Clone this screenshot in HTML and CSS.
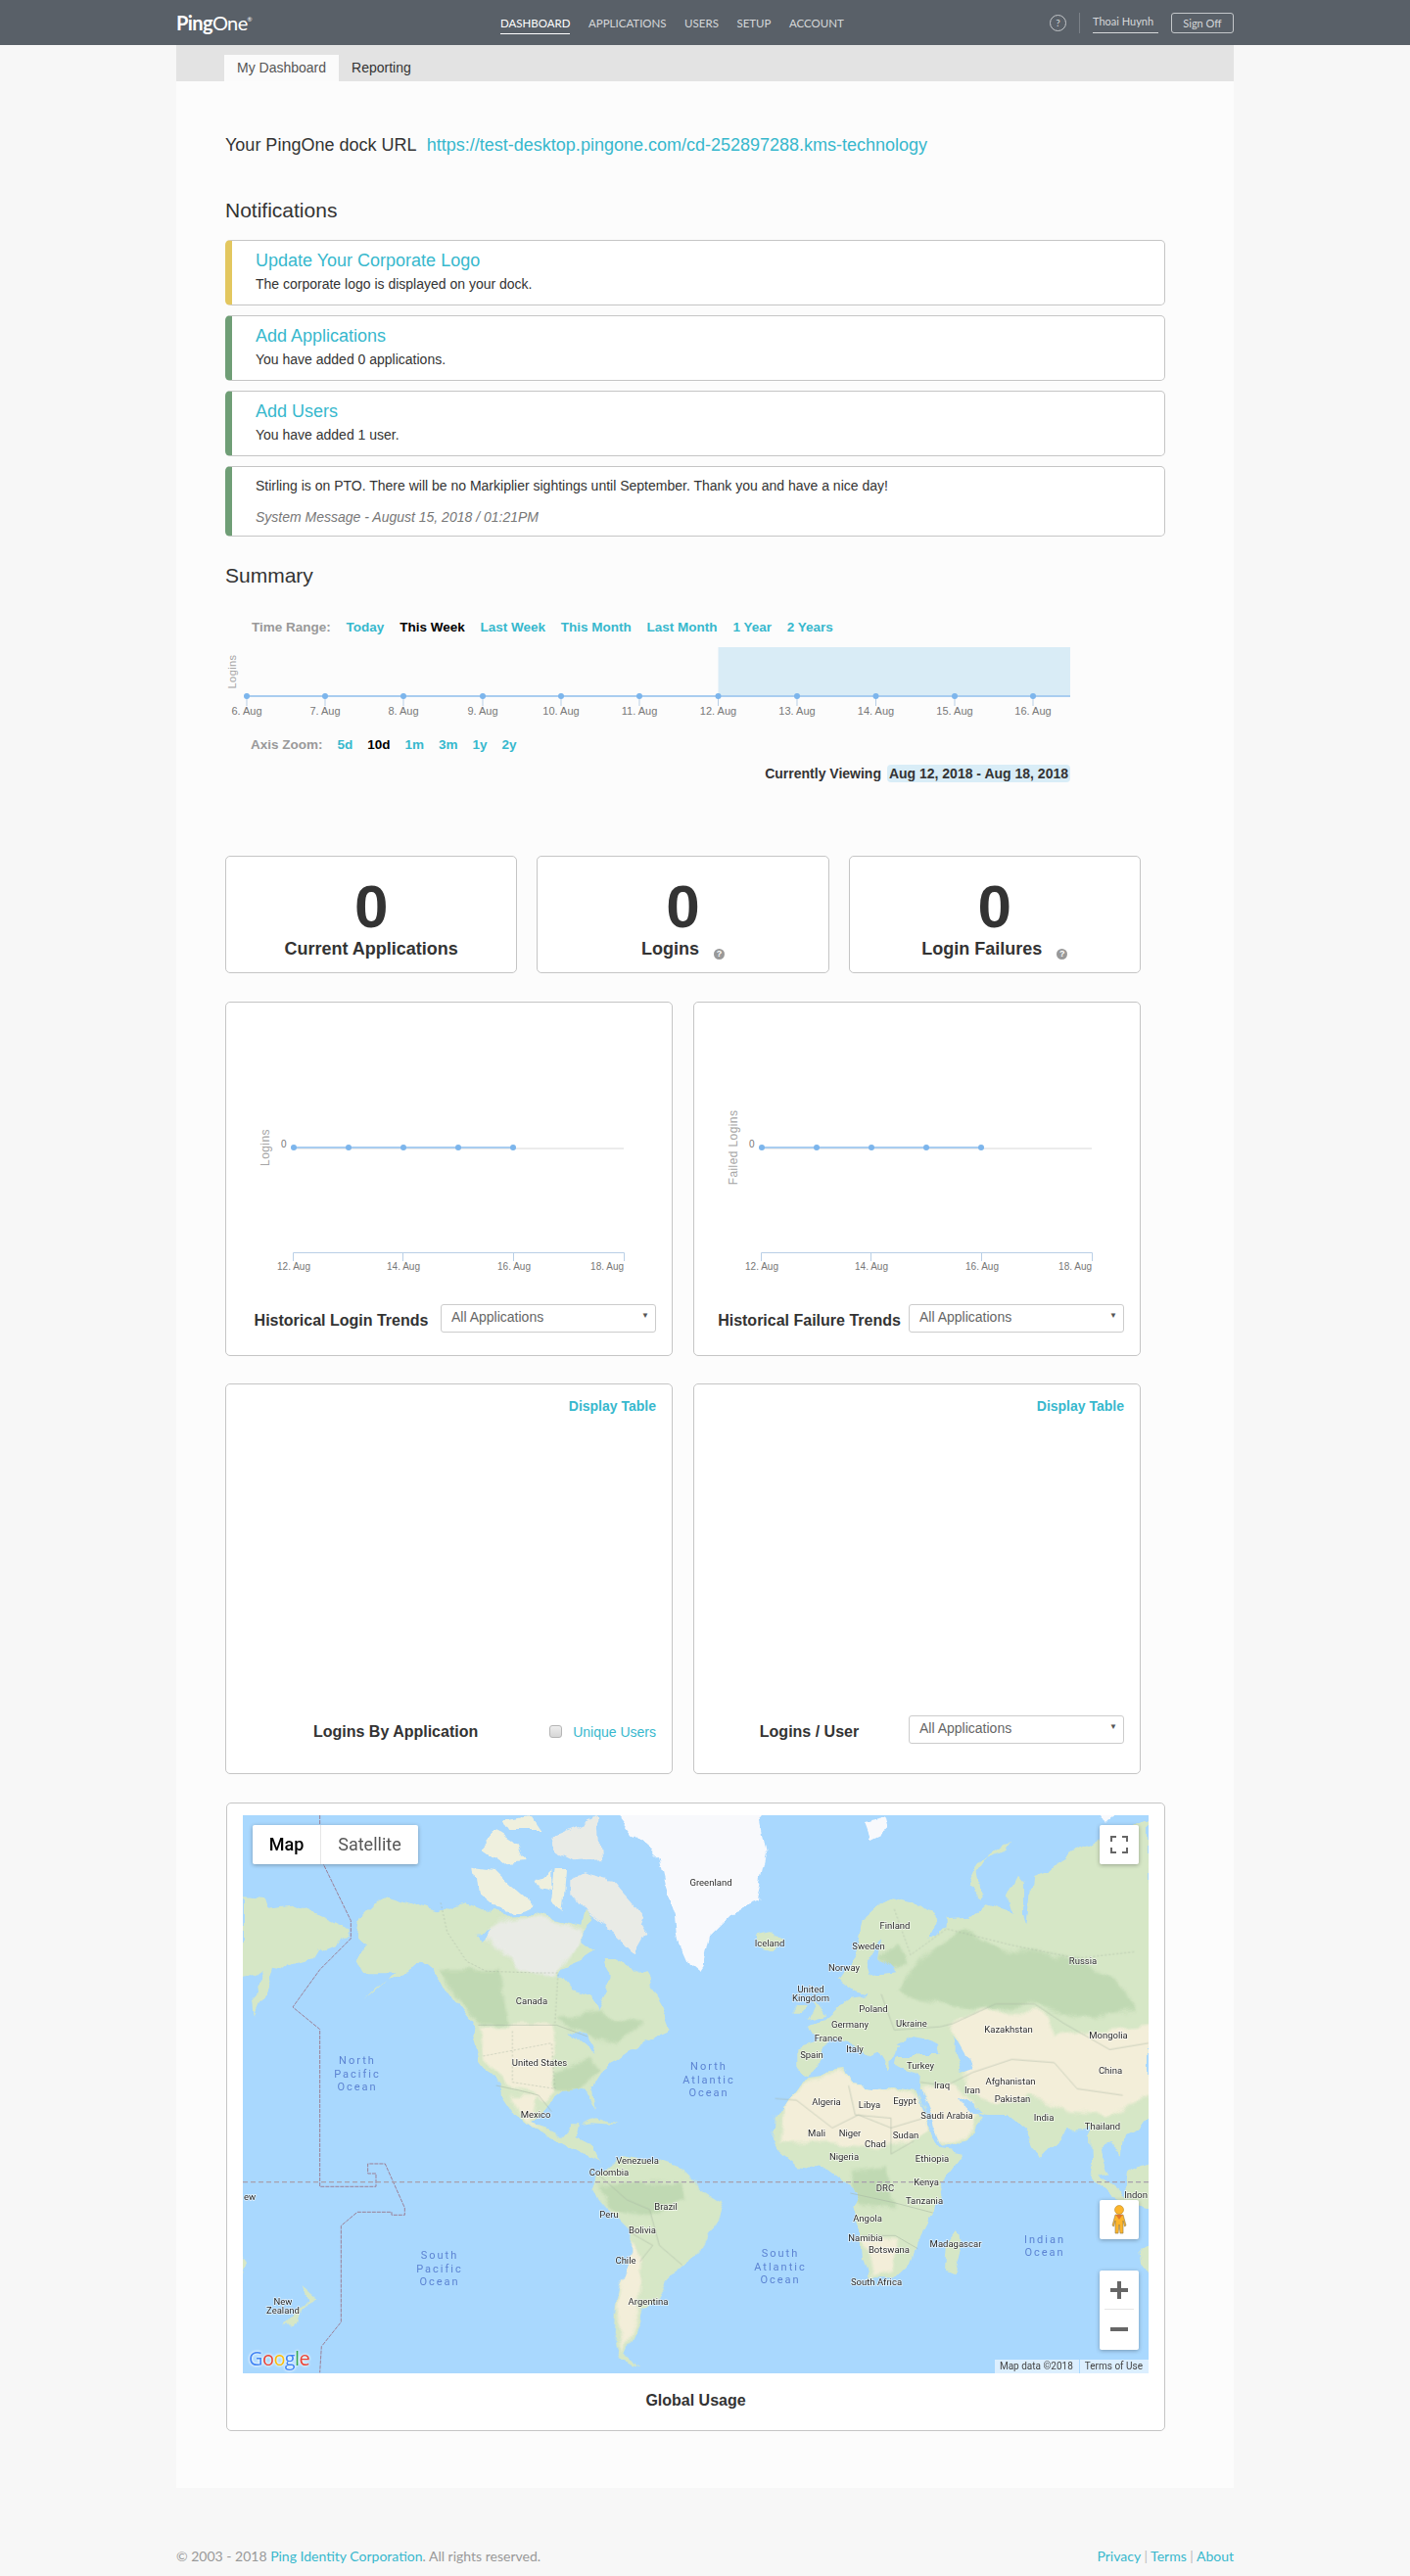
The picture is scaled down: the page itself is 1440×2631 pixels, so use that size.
FILE: index.html
```html
<!DOCTYPE html>
<html>
<head>
	<meta charset="utf-8">
	<title>PingOne - My Dashboard</title>
	<link rel="stylesheet" href="styles.css">
</head>
<body>
	<header class="topbar">
		<div class="topbar-inner">
			<a class="logo"><b>Ping</b>One<sup>®</sup></a>
			<nav class="mainnav">
				<a class="active">DASHBOARD</a>
				<a>APPLICATIONS</a>
				<a>USERS</a>
				<a>SETUP</a>
				<a>ACCOUNT</a>
			</nav>
			<div class="usernav">
				<span class="help">?</span>
				<span class="username">Thoai Huynh</span>
				<span class="signoff">Sign Off</span>
			</div>
		</div>
	</header>

	<main class="page">
		<div class="tabs">
			<a class="tab active">My Dashboard</a>
			<a class="tab">Reporting</a>
		</div>

		<div class="content">
			<p class="dock-url">Your PingOne dock URL <a>https://test-desktop.pingone.com/cd-252897288.kms-technology</a></p>

			<h2 class="notif-title">Notifications</h2>
			<div class="notice warn">
				<a class="notice-title">Update Your Corporate Logo</a>
				<p>The corporate logo is displayed on your dock.</p>
			</div>
			<div class="notice">
				<a class="notice-title">Add Applications</a>
				<p>You have added 0 applications.</p>
			</div>
			<div class="notice">
				<a class="notice-title">Add Users</a>
				<p>You have added 1 user.</p>
			</div>
			<div class="notice message">
				<p>Stirling is on PTO. There will be no Markiplier sightings until September. Thank you and have a nice day!</p>
				<p class="stamp">System Message - August 15, 2018 / 01:21PM</p>
			</div>

			<h2 class="summary-title">Summary</h2>
			<div class="range-row">
				<span class="range-label">Time Range:</span>
				<a>Today</a>
				<a class="on">This Week</a>
				<a>Last Week</a>
				<a>This Month</a>
				<a>Last Month</a>
				<a>1 Year</a>
				<a>2 Years</a>
			</div>
			<svg class="timeline" width="870" height="85" viewBox="0 0 870 85">
				<rect x="503.5" y="6" width="359.5" height="50" fill="#d9ecf6"/>
				<line x1="22" y1="56" x2="863" y2="56" stroke="#a9cdf0" stroke-width="2"/>
				<g stroke="#b9cfe6">
					<line x1="22" y1="56" x2="22" y2="66"/><line x1="102" y1="56" x2="102" y2="66"/>
					<line x1="182" y1="56" x2="182" y2="66"/><line x1="263" y1="56" x2="263" y2="66"/>
					<line x1="343" y1="56" x2="343" y2="66"/><line x1="423" y1="56" x2="423" y2="66"/>
					<line x1="503.5" y1="56" x2="503.5" y2="66"/><line x1="584" y1="56" x2="584" y2="66"/>
					<line x1="664.5" y1="56" x2="664.5" y2="66"/><line x1="745" y1="56" x2="745" y2="66"/>
					<line x1="825" y1="56" x2="825" y2="66"/>
				</g>
				<g fill="#7cb5ec">
					<circle cx="22" cy="56" r="3"/><circle cx="102" cy="56" r="3"/><circle cx="182" cy="56" r="3"/>
					<circle cx="263" cy="56" r="3"/><circle cx="343" cy="56" r="3"/><circle cx="423" cy="56" r="3"/>
					<circle cx="503.5" cy="56" r="3"/><circle cx="584" cy="56" r="3"/><circle cx="664.5" cy="56" r="3"/>
					<circle cx="745" cy="56" r="3"/><circle cx="825" cy="56" r="3"/>
				</g>
				<text class="axis-title" transform="translate(11 31) rotate(-90)" text-anchor="middle">Logins</text>
				<g class="tick-label" text-anchor="middle">
					<text x="22" y="75">6. Aug</text><text x="102" y="75">7. Aug</text><text x="182" y="75">8. Aug</text>
					<text x="263" y="75">9. Aug</text><text x="343" y="75">10. Aug</text><text x="423" y="75">11. Aug</text>
					<text x="503.5" y="75">12. Aug</text><text x="584" y="75">13. Aug</text><text x="664.5" y="75">14. Aug</text>
					<text x="745" y="75">15. Aug</text><text x="825" y="75">16. Aug</text>
				</g>
			</svg>
			<div class="range-row zoom-row">
				<span class="range-label">Axis Zoom:</span>
				<a>5d</a>
				<a class="on">10d</a>
				<a>1m</a>
				<a>3m</a>
				<a>1y</a>
				<a>2y</a>
			</div>
			<div class="viewing">Currently Viewing <span class="viewing-dates">Aug 12, 2018 - Aug 18, 2018</span></div>

			<div class="stats">
				<div class="stat"><div class="stat-num">0</div><div class="stat-label">Current Applications</div></div>
				<div class="stat"><div class="stat-num">0</div><div class="stat-label">Logins <span class="tip">?</span></div></div>
				<div class="stat"><div class="stat-num">0</div><div class="stat-label">Login Failures <span class="tip">?</span></div></div>
			</div>

			<div class="panels">
				<div class="panel trend">
					<svg class="trend-chart" width="455" height="291" viewBox="0 -1 455 291">
						<line x1="69" y1="148" x2="406" y2="148" stroke="#d8d8d8"/>
						<line x1="69" y1="147" x2="293" y2="147" stroke="#a9cdf0" stroke-width="2"/>
						<g fill="#7cb5ec">
							<circle cx="69" cy="147" r="3"/><circle cx="125" cy="147" r="3"/><circle cx="181" cy="147" r="3"/>
							<circle cx="237" cy="147" r="3"/><circle cx="293" cy="147" r="3"/>
						</g>
						<path d="M68.5 263V254.5H406.5V263M180.5 254.5V263M293.5 254.5V263" fill="none" stroke="#b9cfe6"/>
						<text class="axis-title" transform="translate(44 147) rotate(-90)" text-anchor="middle">Logins</text>
						<text class="tick-label small" x="56" y="147">0</text>
						<g class="tick-label small" text-anchor="middle">
							<text x="69" y="272">12. Aug</text><text x="181" y="272">14. Aug</text><text x="294" y="272">16. Aug</text>
							<text x="406" y="272" text-anchor="end">18. Aug</text>
						</g>
					</svg>
					<div class="panel-foot">
						<span class="panel-title">Historical Login Trends</span>
						<span class="select-wrap"><select><option>All Applications</option></select></span>
					</div>
				</div>
				<div class="panel trend">
					<svg class="trend-chart" width="455" height="291" viewBox="0 -1 455 291">
						<line x1="69" y1="148" x2="406" y2="148" stroke="#d8d8d8"/>
						<line x1="69" y1="147" x2="293" y2="147" stroke="#a9cdf0" stroke-width="2"/>
						<g fill="#7cb5ec">
							<circle cx="69" cy="147" r="3"/><circle cx="125" cy="147" r="3"/><circle cx="181" cy="147" r="3"/>
							<circle cx="237" cy="147" r="3"/><circle cx="293" cy="147" r="3"/>
						</g>
						<path d="M68.5 263V254.5H406.5V263M180.5 254.5V263M293.5 254.5V263" fill="none" stroke="#b9cfe6"/>
						<text class="axis-title" transform="translate(44 147) rotate(-90)" text-anchor="middle">Failed Logins</text>
						<text class="tick-label small" x="56" y="147">0</text>
						<g class="tick-label small" text-anchor="middle">
							<text x="69" y="272">12. Aug</text><text x="181" y="272">14. Aug</text><text x="294" y="272">16. Aug</text>
							<text x="406" y="272" text-anchor="end">18. Aug</text>
						</g>
					</svg>
					<div class="panel-foot">
						<span class="panel-title">Historical Failure Trends</span>
						<span class="select-wrap"><select><option>All Applications</option></select></span>
					</div>
				</div>
			</div>

			<div class="panels second">
				<div class="panel usage">
					<a class="display-table">Display Table</a>
					<div class="panel-foot">
						<span class="panel-title">Logins By Application</span>
						<label class="unique"><input type="checkbox"> Unique Users</label>
					</div>
				</div>
				<div class="panel usage">
					<a class="display-table">Display Table</a>
					<div class="panel-foot">
						<span class="panel-title">Logins / User</span>
						<span class="select-wrap"><select><option>All Applications</option></select></span>
					</div>
				</div>
			</div>

			<div class="map-card">
				<div class="map">
					<svg class="world" width="925" height="570" viewBox="0 0 925 570">
						<defs>
							<filter id="rough" x="-5%" y="-5%" width="110%" height="110%">
								<feTurbulence type="fractalNoise" baseFrequency="0.035" numOctaves="3" seed="4" result="noise"/>
								<feDisplacementMap in="SourceGraphic" in2="noise" scale="16" xChannelSelector="R" yChannelSelector="G"/>
							</filter>
							<polygon id="north-america" points="410,370 490,290 590,320 660,340 740,310 790,330 860,350 960,345 1040,370 1090,380 1100,330 1130,360 1090,400 1090,430 1130,460 1100,480 1030,510 1020,530 1060,580 1120,600 1140,650 1170,590 1175,530 1160,480 1200,480 1240,530 1280,520 1340,620 1370,700 1300,730 1240,760 1200,790 1180,800 1130,880 1140,940 1110,880 1040,890 990,930 970,960 930,980 990,1000 1030,1020 1060,985 1085,985 1070,1020 1110,1040 1130,1090 1145,1100 1100,1080 1030,1040 940,1000 890,960 830,870 780,800 765,730 770,690 730,640 680,570 600,500 530,530 470,570 430,610 500,550 520,520 430,520 410,480 420,440 400,420"/>
							<polygon id="south-america" points="1130,120 1140,60 1210,0 1300,15 1400,50 1450,100 1530,150 1495,220 1450,290 1400,340 1340,420 1280,480 1270,510 1230,600 1270,650 1220,620 1190,540 1200,440 1240,300 1240,240 1180,180"/>
							<polygon id="eurasia" points="470,540 520,470 545,370 590,330 630,295 690,310 765,370 745,410 800,385 800,355 870,350 920,310 980,330 1000,350 985,300 1020,230 1035,250 1035,340 1045,370 1060,240 1110,220 1150,180 1260,110 1330,100 1400,60 1425,50 1425,950 1380,1010 1350,1030 1340,1080 1300,1050 1270,1060 1300,1150 1240,1120 1235,1000 1180,1000 1120,1060 1085,1095 1040,1000 990,960 930,960 905,950 925,970 880,1020 790,1055 760,1000 715,900 720,840 680,820 645,800 650,780 770,780 760,750 680,720 650,760 620,820 590,770 560,780 500,740 450,720 420,760 430,790 370,835 340,815 340,760 400,740 380,690 430,660 500,600 560,590 520,580 480,550"/>
							<polygon id="africa" points="370,840 490,825 510,870 590,880 620,870 710,890 740,980 785,1060 855,1070 790,1160 763,1260 712,1360 689,1420 643,1465 562,1465 540,1410 534,1310 511,1250 528,1200 494,1170 440,1130 350,1120 290,1070 270,1040 275,975 310,920"/>
							<clipPath id="clip-na"><use href="#north-america"/></clipPath>
							<clipPath id="clip-sa"><use href="#south-america"/></clipPath>
							<clipPath id="clip-eu"><use href="#eurasia"/></clipPath>
							<clipPath id="clip-af"><use href="#africa"/></clipPath>
						</defs>
						<rect width="925" height="570" fill="#a9d8fe"/>

						<g filter="url(#rough)">
							<!-- americas, arctic -->
							<g transform="translate(-18 -14) scale(.3333)">
								<polygon class="land" points="54,295 120,300 130,330 200,320 280,350 375,395 345,440 285,465 270,490 200,510 150,500 130,570 95,650 85,570 120,510 54,540"/>
								<use class="land" href="#north-america"/>
								<g clip-path="url(#clip-na)">
									<polygon class="ice soft" points="860,360 960,350 1090,390 1090,430 1020,510 1015,530 900,520 850,480 790,400"/>
									<polygon class="forest soft" points="660,520 840,520 870,680 775,680 730,620"/>
									<polygon class="forest soft" points="1020,660 1150,650 1280,680 1200,740 1100,710"/>
									<polygon class="forest soft" points="1010,830 1120,790 1150,830 1080,890 1010,890"/>
									<polygon class="sand soft" points="790,690 1015,690 1000,780 1010,890 970,930 940,890 850,870 800,790"/>
									<polygon class="sand soft" points="870,900 950,900 930,980 990,1010 930,990"/>
								</g>
								<polygon class="ice" points="1060,240 1100,220 1180,240 1250,320 1300,400 1260,470 1190,400 1110,340 1060,280"/>
								<polygon class="tundra" points="760,200 830,210 870,250 950,320 890,340 830,330 770,280"/>
								<polygon class="ice" points="1000,110 1140,50 1150,180 1070,190 1010,160"/>
								<polygon class="tundra" points="780,140 830,85 900,130 920,180 850,190"/>
								<polygon class="tundra" points="950,250 1000,210 1000,280 960,270"/>
								<polygon class="tundra" points="1010,210 1050,210 1040,330 1000,300"/>
								<polygon class="tundra" points="860,60 930,45 960,90 880,90"/>
								<polygon class="snow" points="1205,42 1250,100 1330,170 1350,250 1380,340 1385,420 1420,500 1450,525 1460,510 1480,420 1560,340 1635,310 1640,280 1665,170 1645,60 1640,30 1205,30"/>
								<polygon class="land" points="1090,990 1140,970 1190,990 1130,985"/>
								<polygon class="lake" points="770,395 810,390 790,420"/>
								<polygon class="lake" points="1060,700 1110,715 1130,770 1090,740"/>
							</g>

							<!-- south america, new zealand -->
							<g transform="translate(-18 346) scale(.3333)">
								<use class="land" href="#south-america"/>
								<g clip-path="url(#clip-sa)">
									<polygon class="forest soft" points="1150,100 1390,80 1400,140 1300,190 1180,170"/>
									<polygon class="sand soft" points="1230,250 1280,320 1270,480 1220,600 1200,480"/>
								</g>
								<polygon class="land" points="235,405 275,440 240,470 210,530 180,530 215,490 250,450"/>
								<polygon class="land" points="54,310 66,340 54,380"/>
							</g>

							<!-- europe, asia, africa -->
							<g transform="translate(452 -14) scale(.3333)">
								<use class="land" href="#eurasia"/>
								<g clip-path="url(#clip-eu)">
									<polygon class="forest soft" points="650,580 720,480 850,390 980,450 1100,470 1200,480 1330,540 1380,640 1200,660 1050,620 900,640 790,620 700,600"/>
									<polygon class="forest soft" points="600,470 650,440 680,500 610,510"/>
									<polygon class="sand soft" points="820,680 920,640 1100,650 1130,720 1430,680 1430,900 1290,960 1180,950 1050,900 950,930 870,880 850,760"/>
									<polygon class="sand soft" points="720,880 820,860 905,950 880,1010 790,1050 755,990"/>
								</g>
								<polygon class="water" points="560,500 610,420 600,480 640,520 570,530"/>
								<polygon class="water" points="650,745 700,720 770,745 760,775 680,760"/>
								<polygon class="water" points="830,720 860,770 880,820 850,830 830,780"/>
								<polygon class="water" points="840,900 920,950 900,955 850,930"/>

								<use class="land" href="#africa"/>
								<g clip-path="url(#clip-af)">
									<polygon class="sand soft" points="300,930 375,845 490,830 510,870 620,875 715,900 750,1010 700,1040 600,1060 450,1045 290,1050"/>
									<polygon class="forest soft" points="500,1130 620,1120 640,1240 520,1230"/>
									<polygon class="sand soft" points="545,1330 650,1340 640,1440 570,1460"/>
								</g>
								<polygon class="water" points="712,885 722,885 790,1050 782,1055"/>
								<polygon class="land" points="838,1310 844,1350 815,1435 792,1425 798,1360"/>

								<polygon class="land" points="385,600 420,620 435,650 380,665 400,620"/>
								<polygon class="land" points="335,620 365,625 360,650 335,650"/>
								<polygon class="land" points="212,410 260,400 300,425 265,460 225,450"/>
								<polygon class="land" points="1000,110 980,140 900,180 860,270 900,300 890,220 930,160"/>
								<polygon class="snow" points="540,60 610,45 620,85 560,115"/>
								<polygon class="land" points="1235,1120 1300,1210 1430,1250 1430,1100 1350,1140 1340,1210"/>
								<polygon class="snow" points="1270,30 1340,30 1290,65"/>
							</g>

							<!-- indonesia, australia -->
							<g transform="translate(452 346) scale(.3827 .3333)">
								<polygon class="land" points="1075,40 1100,40 1150,135 1120,110"/>
								<polygon class="land" points="1175,80 1250,30 1250,100 1190,110"/>
								<polygon class="land" points="1210,290 1250,265 1250,405 1215,340"/>
							</g>
						</g>

						<!-- country borders -->
						<g transform="translate(-18 -14) scale(.3333)">
							<polyline class="border" points="775,685 1015,685 1110,720"/>
							<polyline class="border" points="830,870 900,885 960,900 1000,950"/>
							<polyline class="border dashed" points="660,310 680,400 740,490 800,520 960,525 1020,525 1010,680"/>
							<polyline class="border dashed" points="790,780 1000,740 1010,880 880,860 880,700"/>
						</g>
						<g transform="translate(-18 346) scale(.3333)">
							<polyline class="border" points="1140,60 1230,140 1300,170 1330,280 1400,340"/>
							<polyline class="border" points="1240,240 1310,280 1270,330"/>
						</g>
						<g transform="translate(452 -14) scale(.3333)">
							<polyline class="border" points="275,910 340,915 450,1000 530,960 630,1000 730,970"/>
							<polyline class="border" points="500,870 520,960 630,970 630,1080 700,1040"/>
							<polyline class="border" points="720,860 800,870 880,830 1000,790 1130,800 1200,880 1340,900"/>
							<polyline class="border" points="820,680 950,620 1070,620 1160,680 1300,760 1419,740"/>
							<polyline class="border" points="600,590 640,700 780,690 820,680"/>
							<polyline class="border dashed" points="640,330 690,470 800,390 1000,440 1200,480 1380,460"/>
						</g>
						<g transform="translate(452 346) scale(.3827 .3333)">
							<polyline class="border" points="440,120 560,150 660,180"/>
							<polyline class="border" points="470,250 560,250 620,290"/>
						</g>

						<!-- date line, equator -->
						<g transform="translate(-18 -14) scale(.3333)">
							<polyline class="dateline" points="290,42 290,190 300,190 385,365 385,420 290,515 207,630 290,698 290,1180 462,1180 462,1140 437,1140 437,1110 490,1110 550,1245 550,1267 510,1267 510,1258 405,1258 355,1300 355,1595 295,1670 290,1750"/>
							<line class="equator" x1="54" y1="1166" x2="2880" y2="1166"/>
						</g>

						<g class="ocean" text-anchor="middle">
							<text x="117" y="250">North</text><text x="117" y="264">Pacific</text><text x="117" y="277">Ocean</text>
							<text x="476" y="256">North</text><text x="476" y="270">Atlantic</text><text x="476" y="283">Ocean</text>
							<text x="201" y="449">South</text><text x="201" y="463">Pacific</text><text x="201" y="476">Ocean</text>
							<text x="549" y="447">South</text><text x="549" y="461">Atlantic</text><text x="549" y="474">Ocean</text>
							<text x="819" y="433">Indian</text><text x="819" y="446">Ocean</text>
						</g>
						<g class="place" text-anchor="middle">
							<text x="295" y="189">Canada</text><text x="303" y="252">United States</text><text x="299" y="305">Mexico</text>
							<text x="403" y="352">Venezuela</text><text x="374" y="364">Colombia</text><text x="478" y="68">Greenland</text>
							<text x="666" y="112">Finland</text><text x="538" y="130">Iceland</text><text x="639" y="133">Sweden</text>
							<text x="614" y="155">Norway</text><text x="580" y="177">United</text><text x="580" y="186">Kingdom</text>
							<text x="644" y="197">Poland</text><text x="620" y="213">Germany</text><text x="683" y="212">Ukraine</text>
							<text x="598" y="227">France</text><text x="625" y="238">Italy</text><text x="581" y="244">Spain</text>
							<text x="692" y="255">Turkey</text><text x="782" y="218">Kazakhstan</text><text x="884" y="224">Mongolia</text>
							<text x="858" y="148">Russia</text><text x="886" y="260">China</text><text x="784" y="271">Afghanistan</text>
							<text x="714" y="275">Iraq</text><text x="745" y="280">Iran</text><text x="786" y="289">Pakistan</text>
							<text x="818" y="308">India</text><text x="878" y="317">Thailand</text><text x="596" y="292">Algeria</text>
							<text x="640" y="295">Libya</text><text x="676" y="291">Egypt</text><text x="719" y="306">Saudi Arabia</text>
							<text x="586" y="324">Mali</text><text x="620" y="324">Niger</text><text x="677" y="326">Sudan</text>
							<text x="646" y="335">Chad</text><text x="614" y="348">Nigeria</text><text x="704" y="350">Ethiopia</text>
							<text x="698" y="374">Kenya</text><text x="656" y="380">DRC</text><text x="696" y="393">Tanzania</text>
							<text x="432" y="399">Brazil</text><text x="374" y="407">Peru</text><text x="408" y="423">Bolivia</text>
							<text x="391" y="454">Chile</text><text x="414" y="496">Argentina</text><text x="41" y="496">New</text>
							<text x="41" y="505">Zealand</text><text x="638" y="411">Angola</text><text x="636" y="431">Namibia</text>
							<text x="660" y="443">Botswana</text><text x="728" y="437">Madagascar</text><text x="647" y="476">South Africa</text>
							<text x="1" y="389" text-anchor="start">ew</text><text x="924" y="387" text-anchor="end">Indon</text>
						</g>
					</svg>

					<div class="map-type">
						<span class="map-type-btn on">Map</span>
						<span class="map-type-btn">Satellite</span>
					</div>
					<span class="map-btn fullscreen">
						<svg width="18" height="18" viewBox="0 0 18 18"><path d="M1 6V1H6M12 1H17V6M17 12V17H12M6 17H1V12" fill="none" stroke="#666" stroke-width="2"/></svg>
					</span>
					<span class="map-btn pegman">
						<svg width="16" height="30" viewBox="0 0 16 30">
							<circle cx="8" cy="5" r="4.5" fill="#fdb52b" stroke="#b98a2c" stroke-width=".6"/>
							<path d="M4 10H12L15 21L13.5 22L12 16V29H9L8 20L7 29H4V16L2.5 22L1 21Z" fill="#fdb52b" stroke="#8f7a4a" stroke-width=".6"/>
							<path d="M4.5 10H11.5L8 15Z" fill="#e2762b"/>
						</svg>
					</span>
					<div class="map-zoom">
						<span class="zoom-btn plus"></span>
						<span class="zoom-btn minus"></span>
					</div>
					<span class="google"><i class="g-blue">G</i><i class="g-red">o</i><i class="g-yellow">o</i><i class="g-blue">g</i><i class="g-green">l</i><i class="g-red">e</i></span>
					<div class="map-attrib"><span>Map data ©2018</span><span>Terms of Use</span></div>
				</div>
				<div class="map-title">Global Usage</div>
			</div>
		</div>
	</main>

	<footer class="footer">
		<div>© 2003 - 2018 <a>Ping Identity Corporation</a>. All rights reserved.</div>
		<div class="footer-links"><a>Privacy</a> | <a>Terms</a> | <a>About</a></div>
	</footer>
</body>
</html>
```

FILE: styles.css
```css
/* General */
* {
	box-sizing: border-box;
	margin: 0;
	padding: 0;
}

body {
	background: #f7f7f7;
	font-family: "Liberation Sans", Arial, sans-serif;
	color: #333;
}

a {
	color: #37b8cd;
	text-decoration: none;
}

/* Top bar */
.topbar {
	height: 46px;
	background: #596068;
}

.topbar-inner {
	width: 1080px;
	height: 46px;
	margin: 0 auto;
	display: flex;
	align-items: center;
}

.logo {
	width: 331px;
	color: #fff;
	font-family: Lato, sans-serif;
	font-size: 20px;
	letter-spacing: -0.6px;
}

.logo b {
	font-weight: 700;
}

.logo sup {
	font-size: 6px;
	vertical-align: 9px;
	line-height: 0;
}

.mainnav {
	display: flex;
	gap: 18.5px;
	font-family: Lato, sans-serif;
	font-size: 11.5px;
}

.mainnav a {
	color: #d6d8da;
	padding: 6px 0 4px;
	border-bottom: 1px solid transparent;
}

.mainnav a.active {
	color: #fff;
	border-bottom-color: #fff;
}

.usernav {
	margin-left: auto;
	display: flex;
	align-items: center;
	font-family: Lato, sans-serif;
	font-size: 11px;
	color: #d6d8da;
}

.help {
	width: 17px;
	height: 17px;
	border: 1px solid #c4c7ca;
	border-radius: 50%;
	text-align: center;
	line-height: 15px;
	font-size: 10px;
	margin-right: 13px;
}

.username {
	border-left: 1px solid #7b8188;
	padding: 0 0 0 13px;
	height: 21px;
	line-height: 18px;
	width: 81px;
	background: linear-gradient(#d6d8da, #d6d8da) 13px 20px / 68px 1px no-repeat;
}

.signoff {
	width: 64px;
	height: 21px;
	margin-left: 13px;
	border: 1px solid #c4c7ca;
	border-radius: 3px;
	text-align: center;
	line-height: 19px;
}

/* Page and tabs */
.page {
	width: 1080px;
	margin: 0 auto;
	background: #fcfcfc;
	height: 2495px;
}

.tabs {
	height: 37px;
	background: #e3e3e3;
	padding: 10px 0 0 49px;
	display: flex;
	font-size: 14px;
}

.tab {
	color: #333;
	padding: 0 13px;
	line-height: 26px;
}

.tab.active {
	background: #fbfbfb;
	color: #555;
}

.content {
	padding-left: 50px;
}

/* Dock url and notifications */
.dock-url {
	padding-top: 55px;
	font-size: 18px;
	line-height: 20px;
}

.dock-url a {
	margin-left: 6px;
}

.notif-title, .summary-title {
	font-size: 21px;
	font-weight: normal;
	line-height: 24px;
	margin-top: 45px;
}

.notif-title {
	margin-bottom: 18px;
}

.notice {
	width: 960px;
	height: 67px;
	margin-bottom: 10px;
	padding: 9px 0 0 24px;
	background: #fff;
	border: 1px solid #c5c5c5;
	border-left: 7px solid #6f9e76;
	border-radius: 5px;
	font-size: 14px;
}

.notice.warn {
	border-left-color: #e3c75f;
}

.notice.message {
	height: 72px;
	margin-bottom: 0;
	padding-top: 11px;
}

.notice-title {
	display: block;
	font-size: 18px;
	line-height: 22px;
	margin-bottom: 5px;
}

.notice p {
	line-height: 17px;
}

.notice .stamp {
	margin-top: 15px;
	font-style: italic;
	color: #777;
}

.summary-title {
	margin-top: 28px;
}

/* Time range */
.range-row {
	margin-top: 32px;
	padding-left: 27px;
	display: flex;
	gap: 15.8px;
	font-size: 13.5px;
	font-weight: bold;
	line-height: 18px;
}

.range-row .on {
	color: #000;
}

.range-label {
	color: #999;
}

.zoom-row {
	margin-top: 12px;
	padding-left: 26px;
	gap: 15px;
}

.timeline {
	display: block;
	margin-top: 5px;
}

.axis-title {
	font-size: 11px;
	fill: #a5a5a5;
	letter-spacing: 0.4px;
}

.trend-chart .axis-title {
	font-size: 12px;
}

.tick-label {
	font-size: 11px;
	fill: #777;
}

.tick-label.small {
	font-size: 10px;
}

.viewing {
	width: 863px;
	margin-top: 11px;
	text-align: right;
	font-size: 14px;
	font-weight: bold;
	line-height: 18px;
}

.viewing-dates {
	background: #d9edf7;
	border-radius: 4px;
	padding: 1px 2px;
	margin-left: 2px;
}

/* Stat boxes */
.stats {
	width: 935px;
	margin-top: 75px;
	display: flex;
	gap: 20px;
}

.stat {
	flex: 1;
	height: 120px;
	background: #fff;
	border: 1px solid #c5c5c5;
	border-radius: 5px;
	text-align: center;
}

.stat-num {
	margin-top: 18px;
	font-size: 62px;
	font-weight: bold;
	line-height: 66px;
}

.stat-label {
	font-size: 18px;
	font-weight: bold;
	line-height: 20px;
}

.tip {
	display: inline-block;
	width: 11px;
	height: 11px;
	margin-left: 10px;
	border-radius: 50%;
	background: #999;
	color: #fff;
	font-size: 9px;
	line-height: 11px;
	vertical-align: -2px;
}

/* Chart panels */
.panels {
	width: 935px;
	margin-top: 29px;
	display: grid;
	grid-template-columns: 457px 457px;
	gap: 21px;
}

.panels.second {
	margin-top: 28px;
}

.panel {
	background: #fff;
	border: 1px solid #c5c5c5;
	border-radius: 5px;
	display: flex;
	flex-direction: column;
}

.panel.trend {
	height: 362px;
}

.panel.usage {
	height: 399px;
	padding-bottom: 30px;
}

.trend-chart {
	display: block;
}

.panel-foot {
	height: 29px;
	margin-top: 17px;
	padding: 0 16px;
	display: flex;
	align-items: center;
}

.usage .panel-foot {
	margin-top: auto;
}

.panel-title {
	flex: 1;
	text-align: center;
	font-size: 16px;
	font-weight: bold;
	padding-top: 4px;
}

.select-wrap {
	position: relative;
	width: 220px;
	height: 29px;
	flex: none;
}

.select-wrap::after {
	content: "▼";
	position: absolute;
	right: 7px;
	top: 7px;
	font-size: 8px;
	color: #555;
}

.select-wrap select {
	width: 100%;
	height: 100%;
	appearance: none;
	background: #fff;
	border: 1px solid #ccc;
	border-radius: 3px;
	padding: 0 0 3px 10px;
	font-family: "Liberation Sans", Arial, sans-serif;
	font-size: 14px;
	color: #666;
}

.display-table {
	align-self: flex-end;
	margin: 14px 16px 0 0;
	font-size: 14px;
	font-weight: bold;
	line-height: 16px;
}

.unique {
	display: flex;
	align-items: center;
	gap: 11px;
	padding-top: 4px;
	font-size: 14px;
	color: #37b8cd;
}

.unique input {
	appearance: none;
	width: 13px;
	height: 13px;
	background: linear-gradient(#eee, #d6d6d6);
	border: 1px solid #b5b5b5;
	border-radius: 3px;
}

/* Map */
.map-card {
	width: 959px;
	height: 642px;
	margin: 29px 0 0 1px;
	padding: 12px 16px 0;
	background: #fff;
	border: 1px solid #c5c5c5;
	border-radius: 5px;
}

.map {
	position: relative;
	width: 925px;
	height: 570px;
	overflow: hidden;
}

.world {
	display: block;
}

.land { fill: #d6e7c6; }
.forest { fill: #c0d9b3; }
.sand { fill: #f3eed9; }
.ice { fill: #e9ebe6; }
.tundra { fill: #eff0de; }
.snow { fill: #f8f9fc; }
.water, .lake { fill: #a9d8fe; }

.soft {
	filter: blur(5px);
}

.border, .dateline, .equator {
	fill: none;
	vector-effect: non-scaling-stroke;
}

.border {
	stroke: #a5b3a0;
	stroke-width: 0.5px;
}

.border.dashed {
	stroke-dasharray: 2 2;
}

.dateline {
	stroke: #9b7f96;
	stroke-width: 1px;
	stroke-dasharray: 4 1;
}

.equator {
	stroke: #a89fad;
	stroke-width: 1.2px;
	stroke-dasharray: 5 3;
}

.place text {
	font-family: Roboto, sans-serif;
	font-size: 9.5px;
	fill: #2b2b2b;
	dominant-baseline: central;
	stroke: rgba(255, 255, 255, 0.7);
	stroke-width: 1.5px;
	paint-order: stroke;
}

.ocean text {
	font-family: Roboto, sans-serif;
	font-size: 11px;
	letter-spacing: 2px;
	fill: #5c83d2;
	dominant-baseline: central;
}

.map-type {
	position: absolute;
	top: 10px;
	left: 10px;
	height: 40px;
	display: flex;
	background: #fff;
	border-radius: 2px;
	box-shadow: 0 1px 4px rgba(0, 0, 0, 0.3);
	font-family: Roboto, sans-serif;
	font-size: 18px;
	line-height: 40px;
	color: #565656;
}

.map-type-btn {
	width: 99px;
	text-align: center;
}

.map-type-btn.on {
	width: 70px;
	color: #000;
	font-weight: 500;
	border-right: 1px solid #e6e6e6;
}

.map-btn {
	position: absolute;
	left: 875px;
	width: 40px;
	height: 40px;
	background: #fff;
	border-radius: 2px;
	box-shadow: 0 1px 4px rgba(0, 0, 0, 0.3);
	display: flex;
	align-items: center;
	justify-content: center;
}

.fullscreen {
	top: 10px;
}

.pegman {
	top: 393px;
}

.map-zoom {
	position: absolute;
	left: 875px;
	top: 465px;
	width: 40px;
	height: 81px;
	background: #fff;
	border-radius: 2px;
	box-shadow: 0 1px 4px rgba(0, 0, 0, 0.3);
}

.zoom-btn {
	display: block;
	position: relative;
	height: 40px;
}

.zoom-btn.plus {
	border-bottom: 1px solid #e6e6e6;
	margin: 0 5px;
}

.zoom-btn.plus::before, .zoom-btn.minus::before {
	content: "";
	position: absolute;
	left: 50%;
	top: 50%;
	width: 18px;
	height: 4px;
	margin: -2px 0 0 -9px;
	background: #666;
}

.zoom-btn.plus::after {
	content: "";
	position: absolute;
	left: 50%;
	top: 50%;
	width: 4px;
	height: 18px;
	margin: -9px 0 0 -2px;
	background: #666;
}

.google {
	position: absolute;
	left: 6px;
	top: 542px;
	font-family: "Open Sans", sans-serif;
	font-size: 20px;
	line-height: 26px;
	letter-spacing: -0.6px;
	text-shadow: 0 0 3px #fff, 0 0 3px #fff;
}

.google i {
	font-style: normal;
}

.g-blue { color: #4285f4; }
.g-red { color: #ea4335; }
.g-yellow { color: #fbbc05; }
.g-green { color: #34a853; }

.map-attrib {
	position: absolute;
	right: 0;
	bottom: 0;
	height: 14px;
	display: flex;
	background: rgba(255, 255, 255, 0.6);
	font-family: Roboto, sans-serif;
	font-size: 10px;
	line-height: 14px;
	color: #444;
}

.map-attrib span {
	padding: 0 6px 0 5px;
}

.map-attrib span + span {
	border-left: 1px solid #a9d8fe;
}

.map-title {
	margin-top: 19px;
	text-align: center;
	font-size: 16px;
	font-weight: bold;
	line-height: 18px;
}

/* Footer */
.footer {
	width: 1080px;
	height: 90px;
	margin: 0 auto;
	padding-top: 61px;
	display: flex;
	justify-content: space-between;
	font-family: Lato, sans-serif;
	font-size: 14px;
	line-height: 18px;
	color: #999;
}

.footer-links {
	color: #bbb;
}
```
